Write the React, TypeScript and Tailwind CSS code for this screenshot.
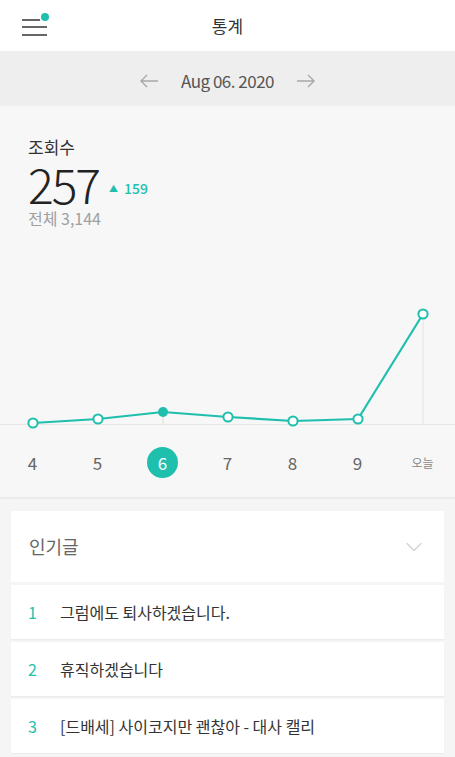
import { ChevronDown } from "lucide-react";

const TEAL = "#1fbfae";

const days = ["4", "5", "6", "7", "8", "9", "오늘"];
const points = [
  { x: 33, y: 194 },
  { x: 98, y: 190 },
  { x: 163, y: 183 },
  { x: 228, y: 188 },
  { x: 293, y: 192 },
  { x: 358, y: 190 },
  { x: 423, y: 85 },
];
const selected = 2;
const BASE = 195.5;

const posts = [
  "그럼에도 퇴사하겠습니다.",
  "휴직하겠습니다",
  "[드배세] 사이코지만 괜찮아 - 대사 캘리",
];

const Arrow = ({ dir }: { dir: "left" | "right" }) => (
  <svg width="20" height="14" viewBox="0 0 20 14" fill="none" stroke="#a8a8a8" strokeWidth="1.4">
    {dir === "left" ? (
      <path d="M19 7H2M8 1L2 7l6 6" />
    ) : (
      <path d="M1 7h17M12 1l6 6-6 6" />
    )}
  </svg>
);

const Chart = () => {
  const line = points.map((p) => `${p.x},${p.y}`).join(" ");
  return (
    <svg width="455" height="212" viewBox="0 0 455 212" className="block">
      <line x1="0" y1={BASE} x2="455" y2={BASE} stroke="#e6e6e6" strokeWidth="1" />
      <line x1={points[selected].x} y1={points[selected].y} x2={points[selected].x} y2={BASE} stroke="#dcdcdc" />
      <line x1="423" y1={points[6].y} x2="423" y2={BASE} stroke="#e4e4e4" />
      <polyline points={line} fill="none" stroke={TEAL} strokeWidth="2.2" strokeLinejoin="round" />
      {points.map((p, i) =>
        i === selected ? (
          <circle key={i} cx={p.x} cy={p.y} r="5" fill={TEAL} />
        ) : (
          <circle key={i} cx={p.x} cy={p.y} r="4.6" fill="white" stroke={TEAL} strokeWidth="2" />
        ),
      )}
    </svg>
  );
};

export default function App() {
  return (
    <div
      className="w-[455px] min-h-[757px] bg-[#f5f5f5]"
      style={{ fontFamily: '"Noto Sans CJK KR", "Noto Sans", sans-serif' }}
    >
      <header className="flex h-[51px] items-center justify-between bg-white px-[22px]">
        <button aria-label="메뉴" className="relative flex h-[20px] w-[26px] flex-col justify-between pt-[3px]">
          <span className="block h-[2px] w-[18px] bg-[#666]" />
          <span className="block h-[2px] w-[25px] bg-[#666]" />
          <span className="block h-[2px] w-[25px] bg-[#666]" />
          <span className="absolute right-[-1px] top-[-3px] h-[8px] w-[8px] rounded-full" style={{ background: TEAL }} />
        </button>
        <h1 className="text-[17px] font-normal text-[#333]">통계</h1>
        <div className="w-[26px]" />
      </header>

      <div className="flex h-[55px] items-center justify-center gap-[22px] bg-[#eeeeee] pt-[5px]">
        <Arrow dir="left" />
        <span className="text-[17px] tracking-[-0.5px] text-[#555]">Aug 06. 2020</span>
        <Arrow dir="right" />
      </div>

      <section className="border-b-[2px] border-[#ebebeb] bg-[#f7f7f7]">
        <div className="px-[28px] pt-[29px]">
          <div className="text-[17px] leading-[24px] text-[#333]">조회수</div>
          <div className="flex items-end gap-[10px]">
            <span className="text-[48px] font-light leading-[48px] tracking-[-2px] text-[#222]">257</span>
            <span className="mb-[12px] flex items-center gap-[6px] text-[14px] font-medium leading-none" style={{ color: TEAL }}>
              <span className="text-[9px]">▲</span>159
            </span>
          </div>
          <div className="text-[16px] leading-[22px] text-[#a0a0a0]">전체 3,144</div>
        </div>

        <Chart />

        <div className="flex h-[56px] items-start pt-[6px]">
          {days.map((d, i) => (
            <div key={d} className="flex w-[65px] shrink-0 justify-center">
              {i === selected ? (
                <span
                  className="flex h-[31px] w-[31px] items-center justify-center rounded-full text-[17px] text-white"
                  style={{ background: TEAL }}
                >
                  {d}
                </span>
              ) : (
                <span className={`flex h-[31px] items-center ${d === "오늘" ? "text-[12px] text-[#888]" : "text-[17px] text-[#666]"}`}>
                  {d}
                </span>
              )}
            </div>
          ))}
        </div>
      </section>

      <div className="flex flex-col gap-[3px] px-[11px] pt-[12px]">
        <div className="flex h-[71px] items-center justify-between bg-white pl-[18px] pr-[16px]">
          <span className="text-[18px] text-[#666]">인기글</span>
          <ChevronDown size={28} strokeWidth={1} color="#d0d0d0" />
        </div>
        {posts.map((t, i) => (
          <div key={t} className="flex h-[54px] items-center bg-white pl-[17px] shadow-[0_1px_1px_rgba(0,0,0,0.04)]">
            <span className="w-[32px] text-[16px]" style={{ color: TEAL }}>
              {i + 1}
            </span>
            <span className="text-[16px] text-[#333]">{t}</span>
          </div>
        ))}
      </div>
    </div>
  );
}
